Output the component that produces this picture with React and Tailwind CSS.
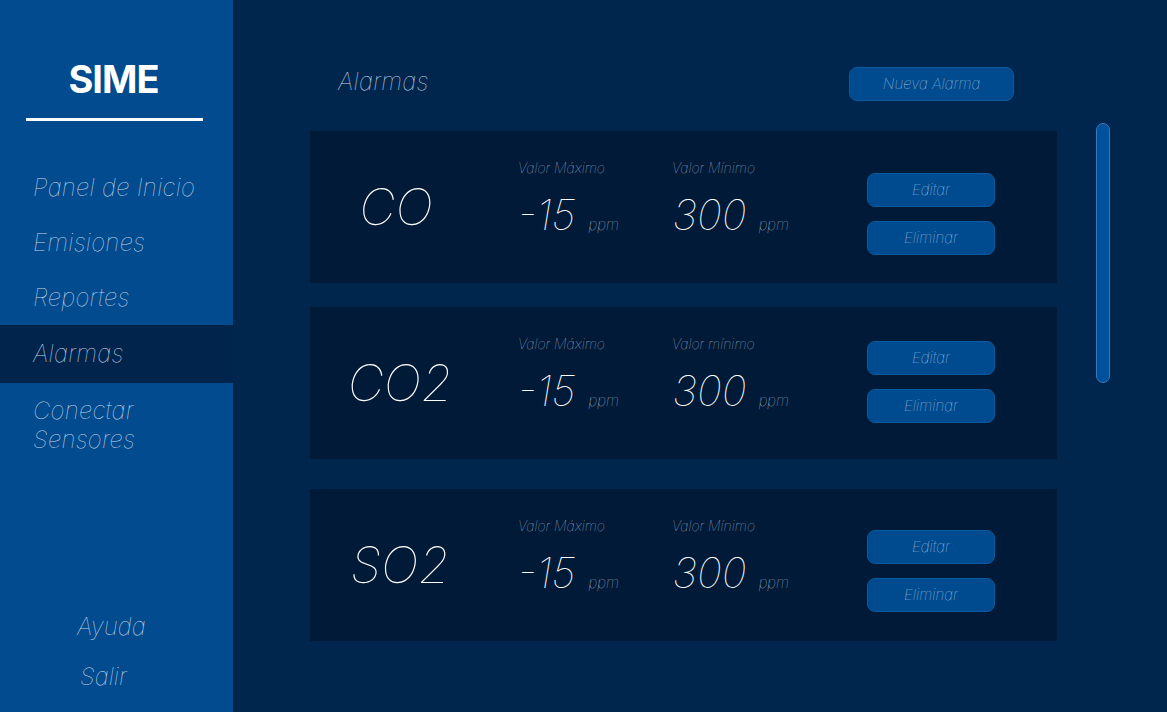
import React from "react";

const font = { fontFamily: "Inter, Roboto, 'Liberation Sans', sans-serif" };

const navItems = ["Panel de Inicio", "Emisiones", "Reportes", "Alarmas"];

const alarms = [
  { name: "CO", max: "-15", minLabel: "Valor Mínimo", min: "300", btnTop: "mt-[42px]", gapAfter: "mb-[24px]", shift: "mr-[8px]" },
  { name: "CO2", max: "-15", minLabel: "Valor mínimo", min: "300", btnTop: "mt-[34px]", gapAfter: "mb-[30px]", shift: "" },
  { name: "SO2", max: "-15", minLabel: "Valor Mínimo", min: "300", btnTop: "mt-[41px]", gapAfter: "", shift: "" },
];

const Sidebar = () => (
  <aside className="w-[233px] h-[712px] bg-[#014b8e] flex flex-col shrink-0">
    <div className="pt-[57px] flex flex-col items-center">
      <h1
        className="text-[38px] leading-[44px] font-bold text-white tracking-tight ml-[-6px]"
        style={{ fontFamily: "Inter, 'Liberation Sans', sans-serif" }}
      >
        SIME
      </h1>
      <div className="w-[177px] h-[3px] bg-white mt-[17px] ml-[-4px]" />
    </div>

    <nav className="mt-[39px] flex flex-col">
      {navItems.map((item) => (
        <div
          key={item}
          className={`h-[55px] flex items-center pl-[33px] text-[24px] italic font-thin tracking-[0.01em] text-[#c9d6e6] ${
            item === "Alarmas" ? "bg-[#00244c] h-[58px]" : ""
          }`}
        >
          {item}
        </div>
      ))}
      <div className="pl-[33px] pt-[13px] text-[24px] leading-[29px] italic font-thin tracking-[0.01em] text-[#c9d6e6]">
        Conectar
        <br />
        Sensores
      </div>
    </nav>

    <div className="mt-auto pb-[20px] flex flex-col items-start text-[24px] italic font-thin text-[#c9d6e6]">
      <span className="leading-[30px] pl-[77px]">Ayuda</span>
      <span className="leading-[30px] mt-[20px] pl-[80px]">Salir</span>
    </div>
  </aside>
);

const Button = ({ children, className = "" }) => (
  <button
    className={`w-[128px] h-[34px] rounded-[8px] bg-[#004b8f] border border-[#0a5aa0] text-[15px] italic font-thin text-[#b9cbe0] ${className}`}
  >
    {children}
  </button>
);

const AlarmCard = ({ alarm }) => (
  <div className={`w-[747px] h-[152px] bg-[#001a38] flex ${alarm.gapAfter}`}>
    <div className="w-[180px] flex items-center justify-center">
      <span className={`text-[50px] italic font-thin text-white ${alarm.shift}`}>{alarm.name}</span>
    </div>

    <div className="w-[155px] pl-[28px] pt-[28px]">
      <div className="text-[14px] leading-[18px] italic font-thin text-[#aebcd0]">Valor Máximo</div>
      <div className="flex items-baseline mt-[14px]">
        <span className="text-[42px] leading-[48px] italic font-thin text-white">{alarm.max}</span>
        <span className="ml-[13px] text-[15px] italic font-thin text-[#aebcd0]">ppm</span>
      </div>
    </div>

    <div className="w-[222px] pl-[27px] pt-[28px]">
      <div className="text-[14px] leading-[18px] italic font-thin text-[#aebcd0]">{alarm.minLabel}</div>
      <div className="flex items-baseline mt-[14px]">
        <span className="text-[42px] leading-[48px] italic font-thin text-white">{alarm.min}</span>
        <span className="ml-[12px] text-[15px] italic font-thin text-[#aebcd0]">ppm</span>
      </div>
    </div>

    <div className={`flex flex-col gap-[14px] ${alarm.btnTop}`}>
      <Button>Editar</Button>
      <Button>Eliminar</Button>
    </div>
  </div>
);

const App = () => {
  return (
    <div className="w-[1167px] h-[712px] flex overflow-hidden bg-[#00264e]" style={font}>
      <Sidebar />

      <main className="flex-1 relative pl-[77px]">
        {/* Header */}
        <div className="flex items-start pt-[67px] pb-[30px] w-[747px]">
          <h2 className="ml-[28px] text-[24px] leading-[29px] italic font-thin text-[#c9d6e6] tracking-[0.01em]">Alarmas</h2>
          <button className="ml-auto mr-[43px] w-[165px] h-[34px] rounded-[8px] bg-[#004b8f] border border-[#0a5aa0] text-[15px] italic font-thin text-[#b9cbe0]">
            Nueva Alarma
          </button>
        </div>

        {/* Cards */}
        <div className="flex flex-col">
          {alarms.map((a) => (
            <AlarmCard key={a.name} alarm={a} />
          ))}
        </div>

        {/* Scrollbar */}
        <div className="absolute left-[863px] top-[123px] w-[14px] h-[260px] rounded-full bg-[#00519b] border border-[#3a78b8]" />
      </main>
    </div>
  );
};

export default App;
